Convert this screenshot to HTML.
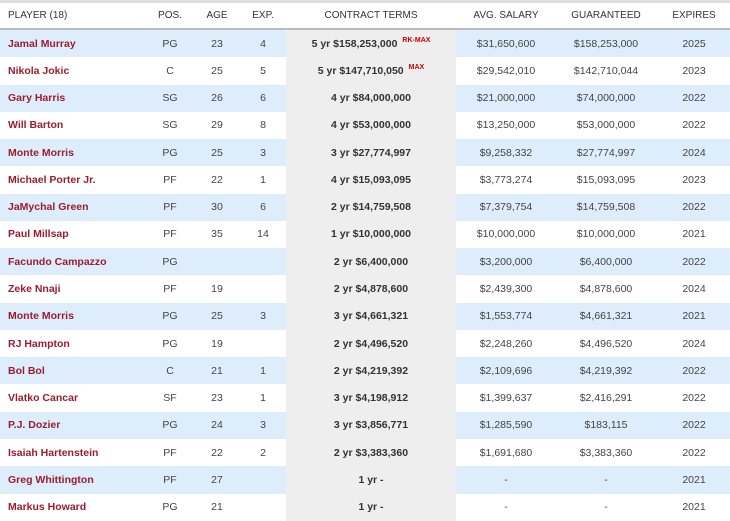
<!DOCTYPE html>
<html><head><meta charset="utf-8"><style>
*{margin:0;padding:0;box-sizing:border-box}
body{width:730px;height:521px;overflow:hidden;background:#fff;font-family:"Liberation Sans",Arial,sans-serif;font-size:10.5px;color:#444}
.top{height:3px;background:#ddd}
.r{display:flex;height:27.28px;align-items:center;position:relative}
.h{height:27px;border-bottom:2px solid #bbb;color:#333;font-size:10px}
.b{background:#deedfc}
.c{text-align:center}
.n{width:150px;padding-left:8px;color:#9b1c2e;font-weight:bold}
.h .n{color:#333;font-weight:normal}
.p{width:40px;margin-left:0;position:absolute;left:150px}
.a{position:absolute;left:197px;width:40px}
.e{position:absolute;left:243px;width:40px}
.k{position:absolute;left:286px;width:170px;height:100%;background:#eee;display:flex;align-items:center;justify-content:center;font-weight:bold;color:#333}
.h .k{background:none;font-weight:normal}
.k sup{color:#c00;font-size:7px;margin-left:5px;position:relative;top:-3px}
.s{position:absolute;left:456px;width:100px}
.g{position:absolute;left:556px;width:100px}
.x{position:absolute;left:664px;width:60px}
</style></head><body>
<div class="top"></div>
<div class="r h"><div class="n">PLAYER (18)</div><div class="p c">POS.</div><div class="a c">AGE</div><div class="e c">EXP.</div><div class="k">CONTRACT TERMS</div><div class="s c">AVG. SALARY</div><div class="g c">GUARANTEED</div><div class="x c">EXPIRES</div></div>
<div class="r b"><div class="n">Jamal Murray</div><div class="p c">PG</div><div class="a c">23</div><div class="e c">4</div><div class="k">5 yr $158,253,000<sup>RK-MAX</sup></div><div class="s c">$31,650,600</div><div class="g c">$158,253,000</div><div class="x c">2025</div></div>
<div class="r"><div class="n">Nikola Jokic</div><div class="p c">C</div><div class="a c">25</div><div class="e c">5</div><div class="k">5 yr $147,710,050<sup>MAX</sup></div><div class="s c">$29,542,010</div><div class="g c">$142,710,044</div><div class="x c">2023</div></div>
<div class="r b"><div class="n">Gary Harris</div><div class="p c">SG</div><div class="a c">26</div><div class="e c">6</div><div class="k">4 yr $84,000,000</div><div class="s c">$21,000,000</div><div class="g c">$74,000,000</div><div class="x c">2022</div></div>
<div class="r"><div class="n">Will Barton</div><div class="p c">SG</div><div class="a c">29</div><div class="e c">8</div><div class="k">4 yr $53,000,000</div><div class="s c">$13,250,000</div><div class="g c">$53,000,000</div><div class="x c">2022</div></div>
<div class="r b"><div class="n">Monte Morris</div><div class="p c">PG</div><div class="a c">25</div><div class="e c">3</div><div class="k">3 yr $27,774,997</div><div class="s c">$9,258,332</div><div class="g c">$27,774,997</div><div class="x c">2024</div></div>
<div class="r"><div class="n">Michael Porter Jr.</div><div class="p c">PF</div><div class="a c">22</div><div class="e c">1</div><div class="k">4 yr $15,093,095</div><div class="s c">$3,773,274</div><div class="g c">$15,093,095</div><div class="x c">2023</div></div>
<div class="r b"><div class="n">JaMychal Green</div><div class="p c">PF</div><div class="a c">30</div><div class="e c">6</div><div class="k">2 yr $14,759,508</div><div class="s c">$7,379,754</div><div class="g c">$14,759,508</div><div class="x c">2022</div></div>
<div class="r"><div class="n">Paul Millsap</div><div class="p c">PF</div><div class="a c">35</div><div class="e c">14</div><div class="k">1 yr $10,000,000</div><div class="s c">$10,000,000</div><div class="g c">$10,000,000</div><div class="x c">2021</div></div>
<div class="r b"><div class="n">Facundo Campazzo</div><div class="p c">PG</div><div class="a c"></div><div class="e c"></div><div class="k">2 yr $6,400,000</div><div class="s c">$3,200,000</div><div class="g c">$6,400,000</div><div class="x c">2022</div></div>
<div class="r"><div class="n">Zeke Nnaji</div><div class="p c">PF</div><div class="a c">19</div><div class="e c"></div><div class="k">2 yr $4,878,600</div><div class="s c">$2,439,300</div><div class="g c">$4,878,600</div><div class="x c">2024</div></div>
<div class="r b"><div class="n">Monte Morris</div><div class="p c">PG</div><div class="a c">25</div><div class="e c">3</div><div class="k">3 yr $4,661,321</div><div class="s c">$1,553,774</div><div class="g c">$4,661,321</div><div class="x c">2021</div></div>
<div class="r"><div class="n">RJ Hampton</div><div class="p c">PG</div><div class="a c">19</div><div class="e c"></div><div class="k">2 yr $4,496,520</div><div class="s c">$2,248,260</div><div class="g c">$4,496,520</div><div class="x c">2024</div></div>
<div class="r b"><div class="n">Bol Bol</div><div class="p c">C</div><div class="a c">21</div><div class="e c">1</div><div class="k">2 yr $4,219,392</div><div class="s c">$2,109,696</div><div class="g c">$4,219,392</div><div class="x c">2022</div></div>
<div class="r"><div class="n">Vlatko Cancar</div><div class="p c">SF</div><div class="a c">23</div><div class="e c">1</div><div class="k">3 yr $4,198,912</div><div class="s c">$1,399,637</div><div class="g c">$2,416,291</div><div class="x c">2022</div></div>
<div class="r b"><div class="n">P.J. Dozier</div><div class="p c">PG</div><div class="a c">24</div><div class="e c">3</div><div class="k">3 yr $3,856,771</div><div class="s c">$1,285,590</div><div class="g c">$183,115</div><div class="x c">2022</div></div>
<div class="r"><div class="n">Isaiah Hartenstein</div><div class="p c">PF</div><div class="a c">22</div><div class="e c">2</div><div class="k">2 yr $3,383,360</div><div class="s c">$1,691,680</div><div class="g c">$3,383,360</div><div class="x c">2022</div></div>
<div class="r b"><div class="n">Greg Whittington</div><div class="p c">PF</div><div class="a c">27</div><div class="e c"></div><div class="k">1 yr -</div><div class="s c">-</div><div class="g c">-</div><div class="x c">2021</div></div>
<div class="r"><div class="n">Markus Howard</div><div class="p c">PG</div><div class="a c">21</div><div class="e c"></div><div class="k">1 yr -</div><div class="s c">-</div><div class="g c">-</div><div class="x c">2021</div></div>
</body></html>
